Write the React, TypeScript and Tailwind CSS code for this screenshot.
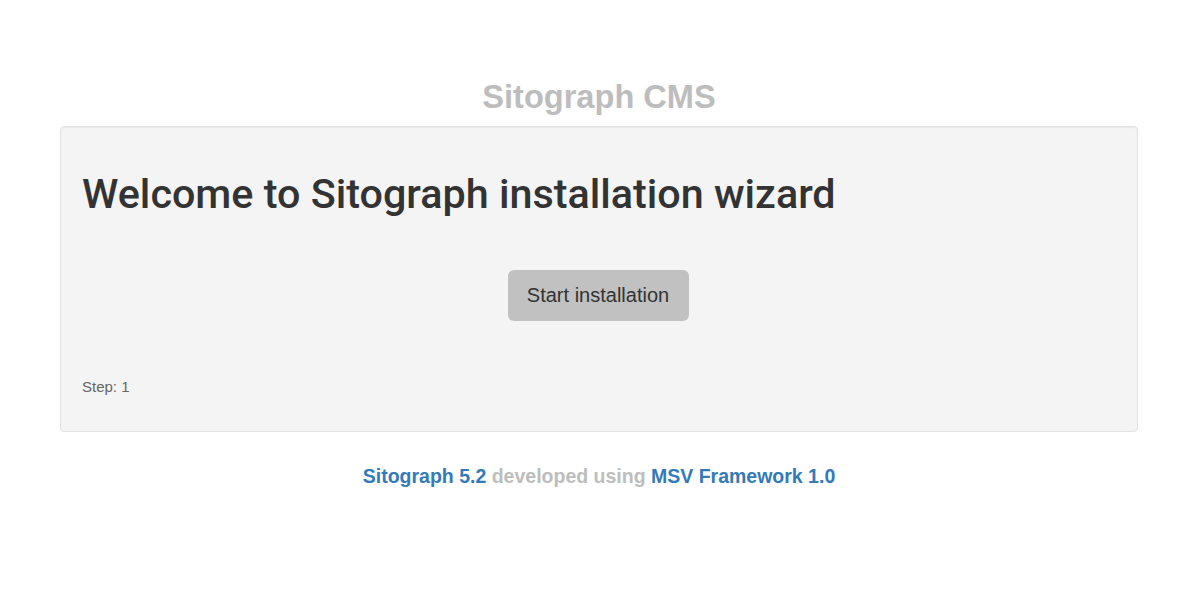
export default function App() {
  return (
    <div className="min-h-[590px] bg-white pl-[60px] pr-[62px] font-['Liberation_Sans',Arial,sans-serif]">
      <h2 className="pt-[78px] pb-[10px] text-center text-[32.6px] leading-[38px] font-bold text-[#bdbdbd]">
        Sitograph CMS
      </h2>
      <div className="h-[306px] rounded border border-[#e3e3e3] bg-[#f4f4f4] px-[21px] shadow-[inset_0_1px_1px_rgba(0,0,0,0.05)]">
        <h1 className="pt-[45px] font-['Roboto',Arial,sans-serif] text-[41.3px] leading-[44px] font-medium text-[#333]">
          Welcome to Sitograph installation wizard
        </h1>
        <div className="mt-[54px] flex justify-center">
          <button className="h-[51px] w-[181px] -translate-x-px rounded-md bg-[#c1c1c1] pb-[2px] text-[20px] text-[#333]">
            Start installation
          </button>
        </div>
        <p className="mt-[56px] text-[15px] leading-[20px] text-[#666]">Step: 1</p>
      </div>
      <p className="mt-[32px] text-center text-[19.5px] leading-[24px] font-bold">
        <span className="text-[#337ab7]">Sitograph 5.2</span>{" "}
        <span className="text-[#bdbdbd]">developed using</span>{" "}
        <span className="text-[#337ab7]">MSV Framework 1.0</span>
      </p>
    </div>
  );
}
